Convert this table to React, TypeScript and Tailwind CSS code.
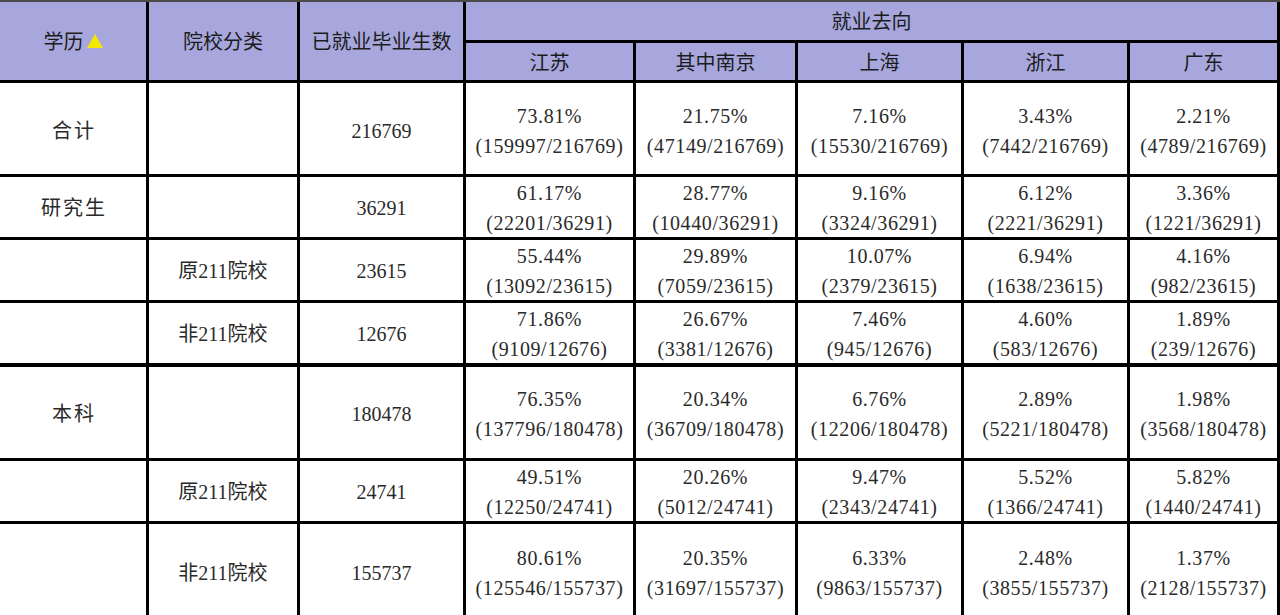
import React from "react";

type Row = {
  level: string;
  kind: string;
  total: string;
  cells: [string, string][];
  cls: string;
};

const regions = ["江苏", "其中南京", "上海", "浙江", "广东"];

// 就业去向 data, row heights follow the screenshot
const rows: Row[] = [
  {
    level: "合计",
    kind: "",
    total: "216769",
    cls: "h-[91px] pt-[5px]",
    cells: [
      ["73.81%", "159997/216769"],
      ["21.75%", "47149/216769"],
      ["7.16%", "15530/216769"],
      ["3.43%", "7442/216769"],
      ["2.21%", "4789/216769"],
    ],
  },
  {
    level: "研究生",
    kind: "",
    total: "36291",
    cls: "h-[60px] pt-[2px]",
    cells: [
      ["61.17%", "22201/36291"],
      ["28.77%", "10440/36291"],
      ["9.16%", "3324/36291"],
      ["6.12%", "2221/36291"],
      ["3.36%", "1221/36291"],
    ],
  },
  {
    level: "",
    kind: "原211院校",
    total: "23615",
    cls: "h-[60px] pt-[2px]",
    cells: [
      ["55.44%", "13092/23615"],
      ["29.89%", "7059/23615"],
      ["10.07%", "2379/23615"],
      ["6.94%", "1638/23615"],
      ["4.16%", "982/23615"],
    ],
  },
  {
    level: "",
    kind: "非211院校",
    total: "12676",
    cls: "h-[60px] pt-[2px]",
    cells: [
      ["71.86%", "9109/12676"],
      ["26.67%", "3381/12676"],
      ["7.46%", "945/12676"],
      ["4.60%", "583/12676"],
      ["1.89%", "239/12676"],
    ],
  },
  {
    level: "本科",
    kind: "",
    total: "180478",
    cls: "h-[91px] pt-[3px]",
    cells: [
      ["76.35%", "137796/180478"],
      ["20.34%", "36709/180478"],
      ["6.76%", "12206/180478"],
      ["2.89%", "5221/180478"],
      ["1.98%", "3568/180478"],
    ],
  },
  {
    level: "",
    kind: "原211院校",
    total: "24741",
    cls: "h-[60px] pt-[2px]",
    cells: [
      ["49.51%", "12250/24741"],
      ["20.26%", "5012/24741"],
      ["9.47%", "2343/24741"],
      ["5.52%", "1366/24741"],
      ["5.82%", "1440/24741"],
    ],
  },
  {
    level: "",
    kind: "非211院校",
    total: "155737",
    cls: "h-[98px]",
    cells: [
      ["80.61%", "125546/155737"],
      ["20.35%", "31697/155737"],
      ["6.33%", "9863/155737"],
      ["2.48%", "3855/155737"],
      ["1.37%", "2128/155737"],
    ],
  },
];

const cols = "grid grid-cols-[146px_148px_163px_167px_159px_163px_163px_147px] gap-[3px]";
const head = "bg-[#a7a7dd] flex items-center justify-center text-[20px] text-[#1c1c1c]";
const body = "bg-white flex flex-col items-center justify-center text-[20px] leading-[30px] text-[#2a2a2a]";

export default function App() {
  return (
    <div className="h-[615px] w-[1280px] overflow-hidden bg-white">
      <div className={`${cols} grid-rows-[38px_37px] bg-black border-t-2 border-[#4a4a4a] pr-[3px] pb-[3px] font-['Noto_Sans_CJK_SC',sans-serif]`}>
        {/* Header */}
        <div className={`${head} row-span-2`}>
          <span>学历</span>
          <svg width="16" height="14" viewBox="0 0 16 14" className="ml-[3px]">
            <polygon points="8,0 16,14 0,14" fill="#f4e800" />
          </svg>
        </div>
        <div className={`${head} row-span-2`}>院校分类</div>
        <div className={`${head} row-span-2`}>已就业毕业生数</div>
        <div className={`${head} col-span-5`}>就业去向</div>
        {regions.map((r) => (
          <div key={r} className={head}>
            {r}
          </div>
        ))}
      </div>

      {/* Body rows */}
      <div className="flex flex-col gap-[3px] bg-black pr-[3px] font-['Liberation_Serif','Noto_Sans_CJK_SC',serif]">
        {rows.map((row, i) => (
          <div key={i} className={`${cols} ${i === 4 ? "mt-[1px]" : ""}`}>
            <div className={`${body} ${row.cls} tracking-[2px] pl-[2px]`}>{row.level}</div>
            <div className={`${body} ${row.cls}`}>{row.kind}</div>
            <div className={`${body} ${row.cls}`}>{row.total}</div>
            {row.cells.map(([pct, frac], j) => (
              <div key={j} className={`${body} ${row.cls} tracking-[0.6px]`}>
                <span>{pct}</span>
                <span>({frac})</span>
              </div>
            ))}
          </div>
        ))}
      </div>
    </div>
  );
}
